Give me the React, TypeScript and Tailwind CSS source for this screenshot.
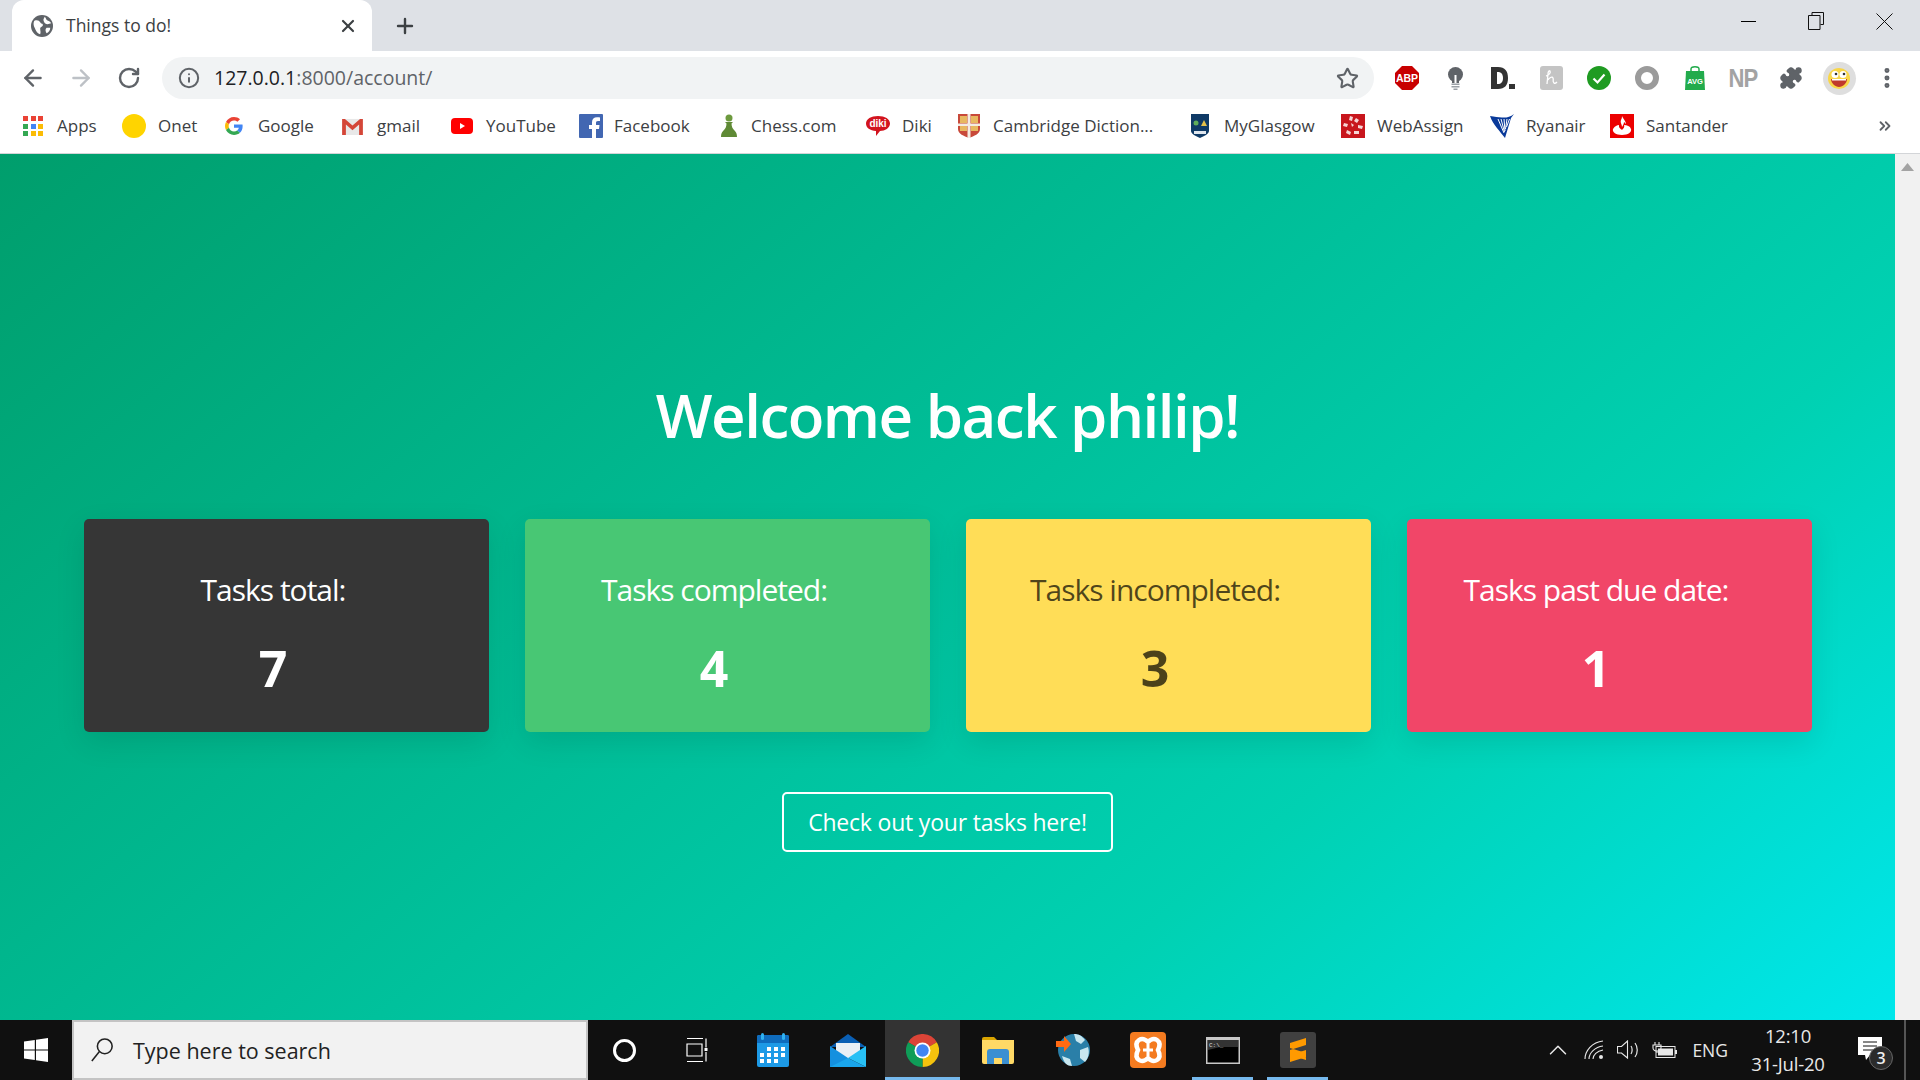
import { ChevronsRight, EllipsisVertical, Plus, RotateCw, Star, X, ArrowLeft, ArrowRight, Info, Puzzle, ChevronUp } from 'lucide-react';

const font = "font-['Open_Sans','Noto_Sans',sans-serif]";

function Globe() {
  return (
    <svg width="22" height="22" viewBox="0 0 24 24">
      <circle cx="12" cy="12" r="12" fill="#5f6368" />
      <path d="M4 6c3-1 5 0 6 2s3 1 3 3-3 2-3 4 1 4 0 6c-4-1-5-5-6-7S2 8 4 6zM15 2c2 2 1 3 3 4s3 1 4 3l-4 1c-2 0-3-1-4-3s0-3 1-5zM17 14l4 0c0 3-2 5-4 6-1-2-2-4 0-6z" fill="#fff" />
    </svg>
  );
}

function AppsIcon() {
  const cols = ['#ea4335', '#ea4335', '#ea4335', '#34a853', '#4285f4', '#fbbc05', '#34a853', '#fbbc05', '#fbbc05'];
  return (
    <div className="grid w-[20px] grid-cols-3 gap-[2.500px]">
      {cols.map((c, i) => (
        <svg key={i} width="5" height="5"><rect width="5" height="5" fill={c} /></svg>
      ))}
    </div>
  );
}

function GoogleIcon() {
  return (
    <svg width="18" height="18" viewBox="0 0 48 48">
      <path fill="#ea4335" d="M24 9.500c3.500 0 6.700 1.300 9.200 3.400l6.800-6.800C35.900 2.400 30.300 0 24 0 14.600 0 6.500 5.400 2.600 13.200l8 6.200C12.400 13.700 17.700 9.500 24 9.500z" />
      <path fill="#4285f4" d="M47 24.500c0-1.600-.1-3.200-.4-4.700H24v9h13c-.6 3-2.300 5.500-4.800 7.200l7.700 6c4.500-4.200 7.100-10.300 7.100-17.500z" />
      <path fill="#fbbc05" d="M10.600 28.600c-.5-1.500-.8-3-.8-4.600s.3-3.100.8-4.600l-8-6.200C.9 16.500 0 20.100 0 24s.9 7.500 2.600 10.800l8-6.200z" />
      <path fill="#34a853" d="M24 48c6.500 0 11.900-2.100 15.900-5.800l-7.700-6c-2.200 1.500-4.900 2.300-8.200 2.300-6.300 0-11.600-4.200-13.400-9.900l-8 6.200C6.500 42.600 14.600 48 24 48z" />
    </svg>
  );
}

function GmailIcon() {
  return (
    <svg width="21" height="17" viewBox="0 0 22 18">
      <rect x="2" y="1" width="18" height="17" fill="#e8e8e8" />
      <path d="M0 1h3l8 7 8-7h3v17h-4V7l-7 6-7-6v11H0z" fill="#d44638" />
    </svg>
  );
}

function YoutubeIcon() {
  return (
    <svg width="22" height="16" viewBox="0 0 22 16">
      <rect width="22" height="16" rx="4" fill="#f00" />
      <path d="M9 5l5 3-5 3z" fill="#fff" />
    </svg>
  );
}

function FacebookIcon() {
  return (
    <svg width="24" height="24" viewBox="0 0 24 24">
      <rect width="24" height="24" rx="1" fill="#4267b2" />
      <path d="M17 24v-9h3l.5-4H17V9c0-1.200.4-2 2-2h2V3.500C20.500 3.400 19.500 3.300 18 3.300c-3 0-5 1.800-5 5V11h-3v4h3v9z" fill="#fff" />
    </svg>
  );
}

function ChessIcon() {
  return (
    <svg width="18" height="24" viewBox="0 0 18 24">
      <circle cx="9" cy="4" r="3.500" fill="#6d9a3e" />
      <path d="M5 8h8l-1.500 1.500c0 3 1 5 3 7 1.500 1.500 2.500 3 2.500 6.500H1c0-3.500 1-5 2.500-6.500 2-2 3-4 3-7z" fill="#5f8a35" />
    </svg>
  );
}

function DikiIcon() {
  return (
    <svg width="24" height="20" viewBox="0 0 24 20">
      <path d="M12 0c7 0 12 3 12 7.500S19 15 14 15l-4 5v-5C4 14.500 0 12 0 7.500 0 3 5 0 12 0z" fill="#d2141e" />
      <text x="12" y="11" textAnchor="middle" fontSize="10" fontWeight="700" fill="#fff" fontFamily="Liberation Sans">diki</text>
    </svg>
  );
}

function CambridgeIcon() {
  return (
    <svg width="22" height="24" viewBox="0 0 22 24">
      <path d="M0 0h22v15c0 5-6 7-11 9C6 22 0 20 0 15z" fill="#c8493a" />
      <path d="M2 2h7v7H2zM13 2h7v7h-7zM2 12h7v5H2zM13 12h7v5h-7z" fill="#e8b860" />
      <path d="M9.500 0h3v24h-3zM0 9.500h22v2.500H0z" fill="#f3ece2" />
    </svg>
  );
}

function GlasgowIcon() {
  return (
    <svg width="18" height="24" viewBox="0 0 18 24">
      <path d="M0 0h18v17c0 3-5 5-9 7-4-2-9-4-9-7z" fill="#0f3a66" />
      <circle cx="5" cy="9" r="2.500" fill="#5fae5a" />
      <path d="M13 6l3 6h-6z" fill="#e5c14a" />
      <path d="M3 17h12v3H3z" fill="#dfe6ee" />
    </svg>
  );
}

function WebAssignIcon() {
  return (
    <svg width="24" height="24" viewBox="0 0 24 24">
      <rect width="24" height="24" fill="#c8161d" />
      <path d="M9 2l3 1-1 4-3-1zM15 4l3 2-2 3-3-2zM3 9l4 1-1 3-4-1zM17 11l5 1-1 3-4-1zM6 16l4 2-1 3-4-2zM13 17l5 0v3h-5zM10 9l3 2-2 2z" fill="#f6d4d4" />
    </svg>
  );
}

function RyanairIcon() {
  return (
    <svg width="24" height="24" viewBox="0 0 24 24">
      <path d="M0 2c5 1 8 1 12 1.500S20 3 24 0l-3 4-6 20C10 17 3 11 0 2z" fill="#0a3a9a" />
      <path d="M8 5l6 14M11 5l3.500 13M14 5l1 12M17 5l-1.500 10M19.500 5l-3 8" stroke="#fff" strokeWidth="1" />
    </svg>
  );
}

function SantanderIcon() {
  return (
    <svg width="24" height="24" viewBox="0 0 24 24">
      <rect width="24" height="24" fill="#ec0000" />
      <path d="M12 2c1 3 4 5 4 8-1-1-1-1-2-2 0 2-1 3-2 5 0-3-2-4-1-7 .5-1 1-2 1-4zM3 15c2-3 4-4 6-4-.5 3 2 4 3 5 1-1 3-3 2-5 3 0 6 1 7 4 1 3-3 6-9 6s-10-3-9-6z" fill="#fff" />
    </svg>
  );
}

const bookmarks = [
  { label: 'Apps', icon: <AppsIcon />, w: 'w-[99px]', gap: 'w-[34px]' },
  { label: 'Onet', icon: <svg width="24" height="24"><circle cx="12" cy="12" r="12" fill="#ffd400" /></svg>, w: 'w-[103px]', gap: 'w-[36px]' },
  { label: 'Google', icon: <GoogleIcon />, w: 'w-[117px]', gap: 'w-[33px]' },
  { label: 'gmail', icon: <GmailIcon />, w: 'w-[109px]', gap: 'w-[35px]' },
  { label: 'YouTube', icon: <YoutubeIcon />, w: 'w-[128px]', gap: 'w-[35px]' },
  { label: 'Facebook', icon: <FacebookIcon />, w: 'w-[141px]', gap: 'w-[35px]' },
  { label: 'Chess.com', icon: <ChessIcon />, w: 'w-[146px]', gap: 'w-[31px]' },
  { label: 'Diki', icon: <DikiIcon />, w: 'w-[92px]', gap: 'w-[36px]' },
  { label: 'Cambridge Diction...', icon: <CambridgeIcon />, w: 'w-[233px]', gap: 'w-[35px]' },
  { label: 'MyGlasgow', icon: <GlasgowIcon />, w: 'w-[150px]', gap: 'w-[33px]' },
  { label: 'WebAssign', icon: <WebAssignIcon />, w: 'w-[149px]', gap: 'w-[36px]' },
  { label: 'Ryanair', icon: <RyanairIcon />, w: 'w-[120px]', gap: 'w-[36px]' },
  { label: 'Santander', icon: <SantanderIcon />, w: 'w-[130px]', gap: 'w-[36px]' },
];

function Extensions() {
  return (
    <>
      <div className="flex w-[48px] justify-center">
        <svg width="24" height="24" viewBox="0 0 24 24">
          <path d="M7 0h10l7 7v10l-7 7H7l-7-7V7z" fill="#c80000" />
          <text x="12" y="16" textAnchor="middle" fontSize="10.500" fontWeight="700" fill="#fff" fontFamily="Liberation Sans">ABP</text>
        </svg>
      </div>
      <div className="flex w-[48px] justify-center">
        <svg width="17" height="23" viewBox="0 0 17 23">
          <circle cx="8.500" cy="7.500" r="7.500" fill="#5f6368" />
          <path d="M5 13h7v3H5z" fill="#5f6368" />
          <path d="M7.500 8h2v8h-2z" fill="#fff" />
          <path d="M4.500 16.500h8v1.500h-8zM4.500 19h8v1.500h-8zM6.500 21.500h4V23h-4z" fill="#9aa0a6" />
        </svg>
      </div>
      <div className="flex w-[48px] justify-center">
        <svg width="24" height="22" viewBox="0 0 24 22">
          <path d="M0 0h7c7 0 10 4 10 11s-3 11-10 11H0zM6 5v12h1c3 0 5-2 5-6s-2-6-5-6z" fill="#333" />
          <rect x="18" y="17" width="6" height="5" fill="#333" />
        </svg>
      </div>
      <div className="flex w-[48px] justify-center">
        <svg width="23" height="24" viewBox="0 0 23 24">
          <rect width="23" height="24" rx="3" fill="#c4c4c4" />
          <path d="M6 10c3-1 5-3 4-5-1-1-2 1-2 3l-1 10M8 14c1-2 4-4 5-2 1 2-1 3 1 5 1 1 2 0 3-1" stroke="#fff" strokeWidth="1.300" fill="none" />
        </svg>
      </div>
      <div className="flex w-[48px] justify-center">
        <svg width="24" height="24" viewBox="0 0 24 24">
          <circle cx="12" cy="12" r="12" fill="#1f9b22" />
          <path d="M6.500 12.500l4 4 7-8" stroke="#fff" strokeWidth="2.200" fill="none" />
        </svg>
      </div>
      <div className="flex w-[48px] justify-center">
        <svg width="24" height="24" viewBox="0 0 24 24">
          <circle cx="12" cy="12" r="9" fill="none" stroke="#9b9b9b" strokeWidth="6" />
        </svg>
      </div>
      <div className="flex w-[48px] justify-center">
        <svg width="20" height="24" viewBox="0 0 20 24">
          <path d="M1 5h18l1 19H0z" fill="#22ab4c" />
          <path d="M6 6V3c0-3 8-3 8 0v3" stroke="#22ab4c" strokeWidth="1.500" fill="none" />
          <text x="10" y="18" textAnchor="middle" fontSize="7.500" fontWeight="700" fill="#fff" fontFamily="Liberation Sans">AVG</text>
        </svg>
      </div>
      <div className="flex w-[48px] scale-x-[0.85] justify-center font-['Liberation_Sans',sans-serif] text-[26px] leading-none font-bold tracking-[-1px] text-[#a3a3a3]">NP</div>
      <div className="flex w-[48px] justify-center">
        <Puzzle size={24} fill="#5f6368" stroke="#5f6368" strokeWidth={1.500} />
      </div>
      <div className="flex w-[48px] justify-center">
        <div className="flex size-[33px] items-center justify-center rounded-full bg-[#dedede]">
          <svg width="22" height="21" viewBox="0 0 22 21">
            <ellipse cx="11" cy="10.500" rx="11" ry="10.500" fill="#f9d648" />
            <ellipse cx="7" cy="6.500" rx="3.500" ry="3.500" fill="#fff" />
            <ellipse cx="15" cy="6.500" rx="3.500" ry="3.500" fill="#fff" />
            <circle cx="8" cy="6" r="1.300" fill="#333" />
            <circle cx="16" cy="6" r="1.300" fill="#333" />
            <path d="M3 11h16c0 4-4 8-8 8s-8-4-8-8z" fill="#c0392b" />
            <path d="M4 11h14v1.500H4z" fill="#fff" />
          </svg>
        </div>
      </div>
      <div className="flex w-[48px] justify-center">
        <EllipsisVertical size={26} color="#5f6368" strokeWidth={2.600} />
      </div>
    </>
  );
}

function BrowserChrome() {
  return (
    <div className={`shrink-0 bg-white ${font}`}>
      {/* tab strip */}
      <div className="flex h-[51px] bg-[#dee1e6]">
        <div className="ml-[12px] flex h-[51px] w-[360px] items-center rounded-t-[12px] bg-white pl-[19px]">
          <Globe />
          <span className="ml-[13px] text-[17.500px] text-[#3c4043]">Things to do!</span>
          <X className="mr-[14px] ml-auto" size={20} color="#3c4043" strokeWidth={2.600} />
        </div>
        <div className="ml-[21px] flex items-center">
          <Plus size={24} color="#3c4043" strokeWidth={2.400} />
        </div>
        <div className="ml-auto flex h-[42px] items-center pr-[2px]">
          <div className="flex w-[68px] justify-center">
            <div className="h-[1px] w-[15px] bg-black" />
          </div>
          <div className="flex w-[68px] justify-center">
            <svg width="16" height="18" viewBox="0 0 16 18">
              <path d="M4 3.500V.5h11.500v12H12.500M.5 3.500h11.500v14H.5z" fill="none" stroke="#111" />
            </svg>
          </div>
          <div className="flex w-[68px] justify-center">
            <svg width="17" height="17" viewBox="0 0 17 17">
              <path d="M.5.5l16 16M16.500.5l-16 16" stroke="#111" />
            </svg>
          </div>
        </div>
      </div>
      {/* toolbar */}
      <div className="flex h-[54px] items-center">
        <div className="flex w-[162px] items-center pl-[9px]">
          <div className="flex w-[48px] justify-center"><ArrowLeft size={26} color="#5f6368" strokeWidth={2.200} /></div>
          <div className="flex w-[48px] justify-center"><ArrowRight size={26} color="#bdc1c6" strokeWidth={2.200} /></div>
          <div className="flex w-[48px] justify-center"><RotateCw size={24} color="#5f6368" strokeWidth={2.400} /></div>
        </div>
        <div className="flex h-[42px] w-[1212px] items-center rounded-full bg-[#f1f3f4] pl-[16px]">
          <Info size={22} color="#5f6368" strokeWidth={2.200} />
          <span className="ml-[14px] text-[19.500px] text-[#202124]">127.0.0.1<span className="text-[#5f6368]">:8000/account/</span></span>
          <Star className="mr-[15px] ml-auto" size={23} color="#5f6368" strokeWidth={2.200} />
        </div>
        <div className="ml-[9px] flex items-center">
          <Extensions />
        </div>
      </div>
      {/* bookmarks */}
      <div className="flex h-[49px] items-center border-b border-[#d3d5d8] pb-[6px] pl-[23px] text-[17px] text-[#3c4043]">
        {bookmarks.map((b) => (
          <div key={b.label} className={`flex shrink-0 items-center whitespace-nowrap ${b.w}`}>
            <div className={`flex shrink-0 items-center ${b.gap}`}>{b.icon}</div>
            <span>{b.label}</span>
          </div>
        ))}
        <ChevronsRight className="mr-[26px] ml-auto" size={18} color="#5f6368" strokeWidth={2.400} />
      </div>
    </div>
  );
}

const cards = [
  { label: 'Tasks total:', value: '7', cls: 'bg-[#363636] text-white' },
  { label: 'Tasks completed:', value: '4', cls: 'bg-[#48c774] text-white' },
  { label: 'Tasks incompleted:', value: '3', cls: 'bg-[#ffdd57] text-black/70' },
  { label: 'Tasks past due date:', value: '1', cls: 'bg-[#f14668] text-white' },
];

function Page() {
  return (
    <div className="flex min-h-0 flex-1">
      <main className={`flex flex-1 flex-col items-center bg-[linear-gradient(141deg,#009e6c_0,#00d1b2_71%,#00e7eb_100%)] pt-[216px] text-white ${font}`}>
        <h1 className="text-[60px] leading-[90px] font-semibold tracking-[-1.500px]">Welcome back philip!</h1>
        <div className="mt-[59px] grid w-[1728px] grid-cols-4 gap-[36px]">
          {cards.map((c) => (
            <div key={c.label} className={`flex h-[213px] flex-col items-center rounded-[5px] pt-[48px] pr-[26px] shadow-[0_10px_30px_rgba(0,0,0,0.1)] ${c.cls}`}>
              <p className="text-[30px] leading-[45px] tracking-[-1px]">{c.label}</p>
              <p className="mt-[26px] text-[50px] leading-[60px] font-bold">{c.value}</p>
            </div>
          ))}
        </div>
        <button className="mt-[60px] flex h-[60px] w-[331px] items-center justify-center rounded-[5px] border-2 border-white text-[23px] tracking-[-0.2px]">
          Check out your tasks here!
        </button>
      </main>
      {/* scrollbar */}
      <div className="flex w-[25px] shrink-0 justify-center bg-[#f1f1f1] pt-[9px]">
        <svg width="13" height="8" viewBox="0 0 13 8"><path d="M6.500 0L13 8H0z" fill="#a3a3a3" /></svg>
      </div>
    </div>
  );
}

function AppIcons() {
  return (
    <>
      <div className="flex h-full w-[75px] items-center justify-center">
        <svg width="32" height="34" viewBox="0 0 32 34">
          <rect y="2" width="32" height="32" rx="2" fill="#1d9ae6" />
          <path d="M0 4a2 2 0 012-2h28a2 2 0 012 2v6H0z" fill="#0f6cbd" />
          <rect x="4" y="0" width="3" height="7" rx="1.500" fill="#2fb1f0" />
          <rect x="25" y="0" width="3" height="7" rx="1.500" fill="#2fb1f0" />
          <path d="M10 14h4v4h-4zM17 14h4v4h-4zM24 14h4v4h-4zM3 20h4v4H3zM10 20h4v4h-4zM17 20h4v4h-4zM24 20h4v4h-4zM3 26h4v4H3zM10 26h4v4h-4zM17 26h4v4h-4z" fill="#fff" />
        </svg>
      </div>
      <div className="flex h-full w-[75px] items-center justify-center">
        <svg width="36" height="33" viewBox="0 0 36 33">
          <path d="M18 0l18 13H0z" fill="#0a5fb4" />
          <path d="M6 9h24v8l-12 8-12-8z" fill="#e9eff5" />
          <path d="M0 12l18 12v9H0z" fill="#1490df" />
          <path d="M36 12L18 24l18 9z" fill="#28c0f5" />
          <path d="M0 33l18-9 18 9z" fill="#1aa6ec" />
        </svg>
      </div>
      <div className="relative flex h-full w-[75px] items-center justify-center bg-[#333333]">
        <svg width="33" height="33" viewBox="0 0 33 33">
          <path d="M16.500 16.500L2.200 8.250A16.500 16.500 0 0 1 30.800 8.250z" fill="#db4437" />
          <path d="M16.500 16.500L30.800 8.250A16.500 16.500 0 0 1 16.500 33z" fill="#f4c20d" />
          <path d="M16.500 16.500L16.500 33A16.500 16.500 0 0 1 2.200 8.250z" fill="#0f9d58" />
          <circle cx="16.500" cy="16.500" r="8" fill="#fff" />
          <circle cx="16.500" cy="16.500" r="6.200" fill="#4285f4" />
        </svg>
        <div className="absolute inset-x-0 bottom-0 h-[3px] bg-[#76b9ed]" />
      </div>
      <div className="flex h-full w-[75px] items-center justify-center">
        <svg width="32" height="27" viewBox="0 0 32 27">
          <path d="M0 2a2 2 0 012-2h10l3 3H0z" fill="#d9a400" />
          <path d="M0 3h32v22a2 2 0 01-2 2H2a2 2 0 01-2-2z" fill="#ffd966" />
          <path d="M5 27V15a3 3 0 013-3h16a3 3 0 013 3v12h-7v-6h-8v6z" fill="#3b8fd1" />
        </svg>
      </div>
      <div className="flex h-full w-[75px] items-center justify-center">
        <svg width="34" height="32" viewBox="0 0 34 32">
          <circle cx="18" cy="16" r="16" fill="#2a7fa8" />
          <path d="M18 0c5 0 8 2 11 6l-4 4-5-3zM24 16l8-3c2 6 0 12-3 15l-5-4zM6 22l8 3 2 7c-5 0-8-3-10-10z" fill="#c7e6ef" />
          <path d="M0 7h8V2l7 8-7 8v-5H0z" fill="#ff6a13" />
        </svg>
      </div>
      <div className="flex h-full w-[75px] items-center justify-center">
        <svg width="36" height="36" viewBox="0 0 36 36">
          <rect width="36" height="36" rx="4" fill="#f47b20" />
          <path d="M9 8c3-2 6-1 9 2 3-3 6-4 9-2 3 2 3 6 1 10 2 4 2 8-1 10-3 2-6 1-9-2-3 3-6 4-9 2-3-2-3-6-1-10-2-4-2-8 1-10z" fill="none" stroke="#fff" strokeWidth="4.500" />
          <path d="M18 12v12M13 18h10" stroke="#fff" strokeWidth="3" />
        </svg>
      </div>
      <div className="relative flex h-full w-[75px] items-center justify-center">
        <svg width="34" height="27" viewBox="0 0 34 27">
          <rect width="34" height="27" fill="#c8c8c8" />
          <rect x="1.500" y="3" width="31" height="22.500" fill="#000" />
          <path d="M2 3h30v7H14L2 13z" fill="#333" />
          <text x="3" y="10" fontSize="6" fill="#ddd" fontFamily="Liberation Mono">C:\_</text>
        </svg>
        <div className="absolute inset-x-[7px] bottom-0 h-[3px] bg-[#76b9ed]" />
      </div>
      <div className="relative flex h-full w-[75px] items-center justify-center">
        <svg width="36" height="36" viewBox="0 0 36 36">
          <rect width="36" height="36" rx="3" fill="#404040" />
          <path d="M26 6v7L10 18v-7zM10 23l16 5v-7l-16-5zM10 23v7l16-5v-7z" fill="#ff9a00" />
        </svg>
        <div className="absolute inset-x-[7px] bottom-0 h-[3px] bg-[#76b9ed]" />
      </div>
    </>
  );
}

function Taskbar() {
  return (
    <div className={`flex h-[60px] shrink-0 items-center bg-[#101010] text-white ${font}`}>
      <div className="flex w-[72px] justify-center">
        <svg width="24" height="24" viewBox="0 0 24 24">
          <path d="M0 3.500l10.800-1.500v9.400H0zM12 1.800L24 0v11.400H12zM0 12.600h10.800V22L0 20.500zM12 12.600h12V24l-12-1.800z" fill="#fff" />
        </svg>
      </div>
      <div className="flex h-full w-[516px] items-center border-2 border-[#c4c4c4] bg-[#f2f2f2] pl-[16px] text-[21.500px] text-[#222]">
        <svg width="24" height="24" viewBox="0 0 24 26">
          <circle cx="15" cy="9" r="8" fill="none" stroke="#222" strokeWidth="1.700" />
          <path d="M9 15L1 25" stroke="#222" strokeWidth="1.700" />
        </svg>
        <span className="mt-[3px] ml-[19px]">Type here to search</span>
      </div>
      <div className="flex w-[72px] justify-center">
        <div className="size-[23px] rounded-full border-[3px] border-white" />
      </div>
      <div className="flex w-[75px] justify-center">
        <svg width="24" height="24" viewBox="0 0 24 24">
          <path d="M1 .5h16M1 23.500h16M1 6h15v12H1zM20 .5v9M20 14v9.500" fill="none" stroke="#fff" strokeWidth="1.200" />
          <rect x="18.500" y="10" width="3" height="3" fill="#fff" />
        </svg>
      </div>
      <AppIcons />
      <div className="ml-auto flex h-full items-center pr-[14px]">
        <ChevronUp size={30} color="#e8e8e8" strokeWidth={1.200} />
        <div className="ml-[11px]">
          <svg width="20" height="20" viewBox="0 0 20 20">
            <path d="M1 19C1 11 8 2 19 1M5 19c0-6 6-12 14-13M9 19c0-4 4-8 10-9" fill="none" stroke="#e8e8e8" strokeWidth="1.100" />
            <circle cx="17" cy="17" r="2" fill="#e8e8e8" />
          </svg>
        </div>
        <div className="ml-[13px]">
          <svg width="24" height="20" viewBox="0 0 24 20">
            <path d="M.5 6.500h4l6-5.500v17l-6-5h-4z" fill="none" stroke="#e8e8e8" strokeWidth="1.100" />
            <path d="M14 6c1.500 2 1.500 6 0 8M18 3c3 4 3 10 0 14" fill="none" stroke="#e8e8e8" strokeWidth="1.200" />
          </svg>
        </div>
        <div className="ml-[11px]">
          <svg width="25" height="16" viewBox="0 0 25 16">
            <path d="M3 0v3M7 0v3M1 3h8v3c0 2-2 3-4 3S1 8 1 6zM5 9v2" fill="none" stroke="#e8e8e8" strokeWidth="1.100" />
            <rect x="4" y="4.500" width="19" height="11" fill="none" stroke="#e8e8e8" />
            <rect x="6" y="6.500" width="15" height="7" fill="#e8e8e8" />
            <rect x="23" y="8" width="2" height="4" fill="#e8e8e8" />
          </svg>
        </div>
        <span className="ml-[15px] text-[17.500px] text-[#e8e8e8]">ENG</span>
        <div className="ml-[15px] flex w-[90px] flex-col items-center text-[18.500px] leading-[28px] tracking-[-0.2px] text-[#e8e8e8]">
          <span>12:10</span>
          <span>31-Jul-20</span>
        </div>
        <div className="relative mr-[22px] ml-[25px] flex items-center">
          <svg width="24" height="26" viewBox="0 0 24 26">
            <path d="M0 0h24v18H12l-4 5-1-5H0z" fill="#fff" />
            <path d="M5 5h14M5 9h14M5 13h10" stroke="#111" strokeWidth="1" />
          </svg>
          <div className="absolute top-[9px] left-[11px] flex size-[24px] items-center justify-center rounded-full border border-[#666] bg-[#2b2b2b] text-[16px] font-semibold text-[#eee]">3</div>
        </div>
        <div className="h-full w-[2px] bg-[#555]" />
      </div>
    </div>
  );
}

export default function App() {
  return (
    <div className="flex h-[1080px] w-[1920px] flex-col overflow-hidden">
      <BrowserChrome />
      <Page />
      <Taskbar />
    </div>
  );
}
